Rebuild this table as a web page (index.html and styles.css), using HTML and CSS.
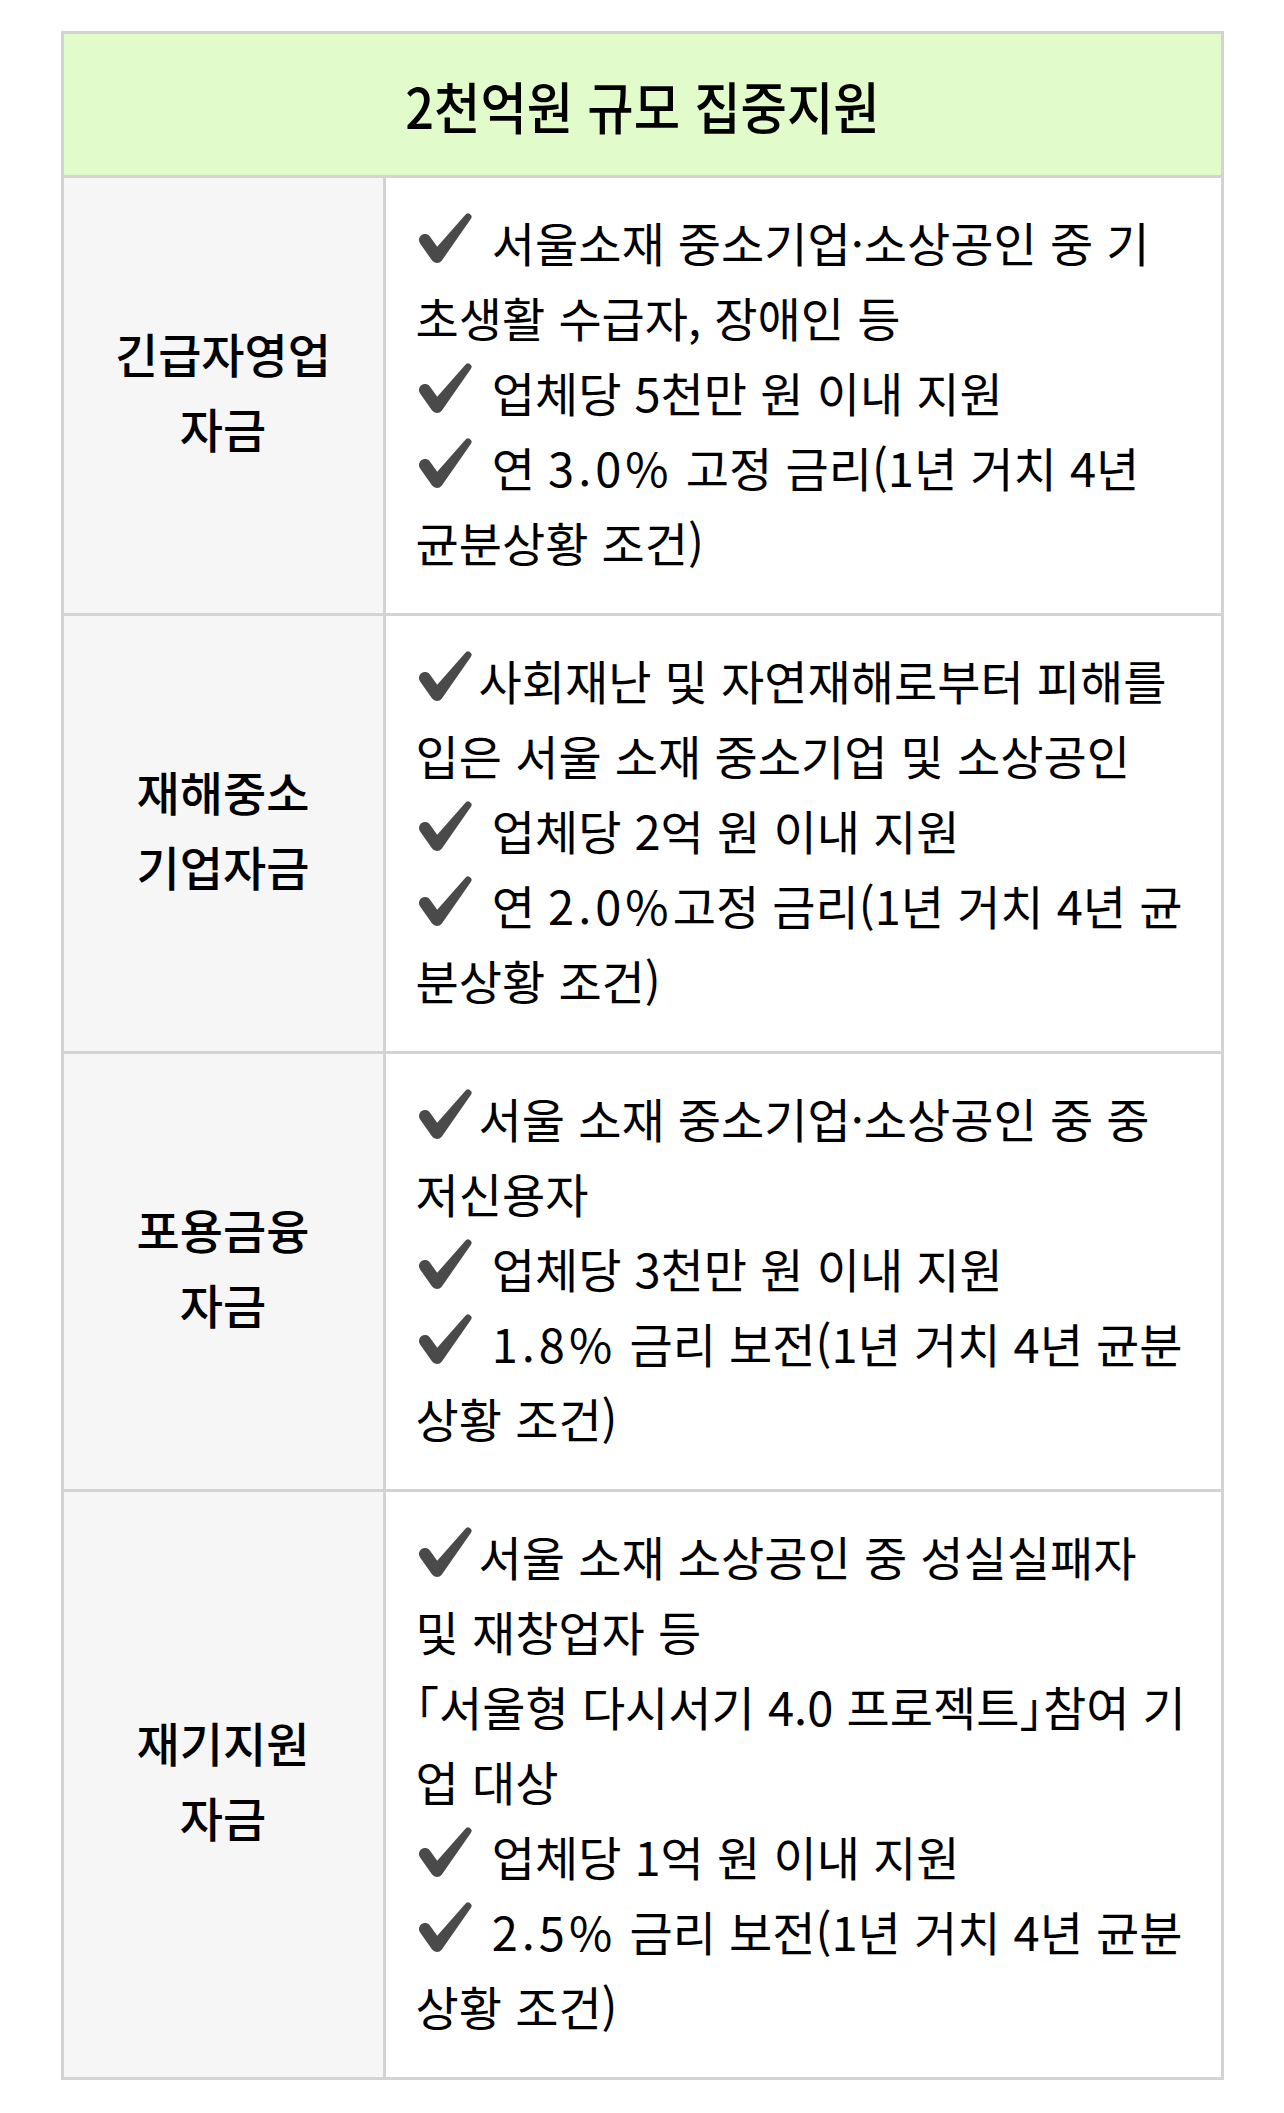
FILE: index.html
```html
<!DOCTYPE html>
<html lang="ko">
<head>
<meta charset="utf-8">
<title>2천억원 규모 집중지원</title>
<link rel="stylesheet" href="styles.css">
</head>
<body>
<div class="fund-table">
  <div class="fund-head"><span class="fund-title">2천억원 규모 집중지원</span></div>

  <div class="fund-row">
    <div class="fund-label">긴급자영업<br>자금</div>
    <div class="fund-desc"><svg class="chk" viewBox="0 0 63 54"><path d="M13.9 25.5 L21.2 35.8 L49.2 3.9 A3.5 3.5 0 0 1 54.8 8.1 L25.7 49.7 A6 6 0 0 1 16.1 49.5 L4.1 32.5 A6 6 0 0 1 13.9 25.5 Z"/></svg> 서울소재 중소기업·소상공인 중 기<br>초생활 수급자, 장애인 등<br><svg class="chk" viewBox="0 0 63 54"><path d="M13.9 25.5 L21.2 35.8 L49.2 3.9 A3.5 3.5 0 0 1 54.8 8.1 L25.7 49.7 A6 6 0 0 1 16.1 49.5 L4.1 32.5 A6 6 0 0 1 13.9 25.5 Z"/></svg> 업체당 5천만 원 이내 지원<br><svg class="chk" viewBox="0 0 63 54"><path d="M13.9 25.5 L21.2 35.8 L49.2 3.9 A3.5 3.5 0 0 1 54.8 8.1 L25.7 49.7 A6 6 0 0 1 16.1 49.5 L4.1 32.5 A6 6 0 0 1 13.9 25.5 Z"/></svg> 연 <span class="pct">3.0%</span> 고정 금리(1년 거치 4년<br>균분상황 조건)</div>
  </div>

  <div class="fund-row">
    <div class="fund-label">재해중소<br>기업자금</div>
    <div class="fund-desc"><svg class="chk" viewBox="0 0 63 54"><path d="M13.9 25.5 L21.2 35.8 L49.2 3.9 A3.5 3.5 0 0 1 54.8 8.1 L25.7 49.7 A6 6 0 0 1 16.1 49.5 L4.1 32.5 A6 6 0 0 1 13.9 25.5 Z"/></svg>사회재난 및 자연재해로부터 피해를<br>입은 서울 소재 중소기업 및 소상공인<br><svg class="chk" viewBox="0 0 63 54"><path d="M13.9 25.5 L21.2 35.8 L49.2 3.9 A3.5 3.5 0 0 1 54.8 8.1 L25.7 49.7 A6 6 0 0 1 16.1 49.5 L4.1 32.5 A6 6 0 0 1 13.9 25.5 Z"/></svg> 업체당 2억 원 이내 지원<br><svg class="chk" viewBox="0 0 63 54"><path d="M13.9 25.5 L21.2 35.8 L49.2 3.9 A3.5 3.5 0 0 1 54.8 8.1 L25.7 49.7 A6 6 0 0 1 16.1 49.5 L4.1 32.5 A6 6 0 0 1 13.9 25.5 Z"/></svg> 연 <span class="pct">2.0%</span>고정 금리(1년 거치 4년 균<br>분상황 조건)</div>
  </div>

  <div class="fund-row">
    <div class="fund-label">포용금융<br>자금</div>
    <div class="fund-desc"><svg class="chk" viewBox="0 0 63 54"><path d="M13.9 25.5 L21.2 35.8 L49.2 3.9 A3.5 3.5 0 0 1 54.8 8.1 L25.7 49.7 A6 6 0 0 1 16.1 49.5 L4.1 32.5 A6 6 0 0 1 13.9 25.5 Z"/></svg>서울 소재 중소기업·소상공인 중 중<br>저신용자<br><svg class="chk" viewBox="0 0 63 54"><path d="M13.9 25.5 L21.2 35.8 L49.2 3.9 A3.5 3.5 0 0 1 54.8 8.1 L25.7 49.7 A6 6 0 0 1 16.1 49.5 L4.1 32.5 A6 6 0 0 1 13.9 25.5 Z"/></svg> 업체당 3천만 원 이내 지원<br><svg class="chk" viewBox="0 0 63 54"><path d="M13.9 25.5 L21.2 35.8 L49.2 3.9 A3.5 3.5 0 0 1 54.8 8.1 L25.7 49.7 A6 6 0 0 1 16.1 49.5 L4.1 32.5 A6 6 0 0 1 13.9 25.5 Z"/></svg> <span class="pct">1.8%</span> 금리 보전(1년 거치 4년 균분<br>상황 조건)</div>
  </div>

  <div class="fund-row">
    <div class="fund-label">재기지원<br>자금</div>
    <div class="fund-desc"><svg class="chk" viewBox="0 0 63 54"><path d="M13.9 25.5 L21.2 35.8 L49.2 3.9 A3.5 3.5 0 0 1 54.8 8.1 L25.7 49.7 A6 6 0 0 1 16.1 49.5 L4.1 32.5 A6 6 0 0 1 13.9 25.5 Z"/></svg>서울 소재 소상공인 중 성실실패자<br>및 재창업자 등<br><span class="bracket">「</span>서울형 다시서기 4.0 프로젝트<span class="bracket">」</span>참여 기<br>업 대상<br><svg class="chk" viewBox="0 0 63 54"><path d="M13.9 25.5 L21.2 35.8 L49.2 3.9 A3.5 3.5 0 0 1 54.8 8.1 L25.7 49.7 A6 6 0 0 1 16.1 49.5 L4.1 32.5 A6 6 0 0 1 13.9 25.5 Z"/></svg> 업체당 1억 원 이내 지원<br><svg class="chk" viewBox="0 0 63 54"><path d="M13.9 25.5 L21.2 35.8 L49.2 3.9 A3.5 3.5 0 0 1 54.8 8.1 L25.7 49.7 A6 6 0 0 1 16.1 49.5 L4.1 32.5 A6 6 0 0 1 13.9 25.5 Z"/></svg> <span class="pct">2.5%</span> 금리 보전(1년 거치 4년 균분<br>상황 조건)</div>
  </div>
</div>
</body>
</html>
```

FILE: styles.css
```css
body {
  margin: 0;
  background: #ffffff;
  color: #000000;
  font-family: "Noto Sans CJK KR", "Noto Sans", sans-serif;
}

.fund-table {
  box-sizing: border-box;
  width: 1163px;
  margin: 31px auto 0;
  border: 3px solid #d3d3d3;
}

.fund-head {
  height: 141px;
  background: #e1fbca;
  border-bottom: 3px solid #d3d3d3;
  display: flex;
  align-items: center;
  justify-content: center;
}

.fund-title {
  display: inline-block;
  font-size: 56px;
  font-weight: 500;
  line-height: 1;
  transform: scaleX(0.9);
}

.fund-row {
  display: grid;
  grid-template-columns: 322px 1fr;
  border-bottom: 3px solid #d3d3d3;
}

.fund-row:last-child {
  border-bottom: 0;
}

.fund-label {
  background: #f6f6f6;
  border-right: 3px solid #d3d3d3;
  display: flex;
  align-items: center;
  justify-content: center;
  padding-bottom: 12px;
  text-align: center;
  font-size: 47px;
  font-weight: 500;
  line-height: 75px;
}

.fund-desc {
  padding: 26px 30px 34px;
  font-size: 47px;
  line-height: 75px;
  white-space: nowrap;
}

.pct {
  letter-spacing: 4px;
}

.bracket {
  font-feature-settings: "halt";
}

.chk {
  width: 63px;
  height: 54px;
  vertical-align: -3px;
  fill: #4a4a4a;
}
```
